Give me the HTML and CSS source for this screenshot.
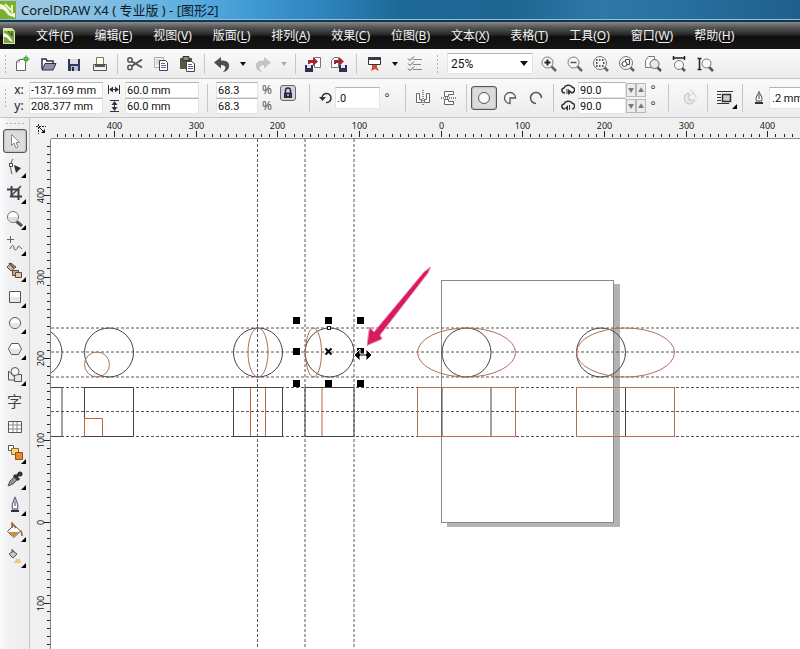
FILE: index.html
```
<!DOCTYPE html>
<html lang="zh-CN">
  <head>
    <meta charset="UTF-8" />
    <meta name="viewport" content="width=device-width, initial-scale=1.0" />
    <title>CorelDRAW X4 ( 专业版 ) - [图形2]</title>
    <link rel="stylesheet" href="styles.css">
  </head>
  <body>
    <header class="titlebar">
      <svg class="logo" viewBox="0 0 16 18">
        <rect width="16" height="18" fill="#7fae2e" />
        <path d="M0 3C6 4 8 8 13 16L8 14C5 9 3 8 0 8Z" fill="#f4f9e4" />
        <path d="M5 3L11 9M12 4V12" stroke="#e8f2c4" stroke-width="2" />
        <path d="M10 13l5 4v-5z" fill="#fff" />
      </svg>
      <h1>CorelDRAW X4 ( 专业版 ) - [图形2]</h1>
    </header>
    <nav class="menubar">
      <svg class="doc" viewBox="0 0 12 16">
        <path d="M0 0H9L12 3V16H0Z" fill="#d7e8a8" />
        <path d="M1 3H11V15H1Z" fill="#7da637" />
        <path d="M1 5C5 6 7 9 10 14L7 13C4 9 3 9 1 9Z" fill="#fff" />
        <path d="M5 3l4 5M9 3v5" stroke="#2d4a17" />
      </svg>
      <a href="#">文件(<u>F</u>)</a>
      <a href="#">编辑(<u>E</u>)</a>
      <a href="#">视图(<u>V</u>)</a>
      <a href="#">版面(<u>L</u>)</a>
      <a href="#">排列(<u>A</u>)</a>
      <a href="#">效果(<u>C</u>)</a>
      <a href="#">位图(<u>B</u>)</a>
      <a href="#">文本(<u>X</u>)</a>
      <a href="#">表格(<u>T</u>)</a>
      <a href="#">工具(<u>O</u>)</a>
      <a href="#">窗口(<u>W</u>)</a>
      <a href="#">帮助(<u>H</u>)</a>
    </nav>

    <!-- 标准工具栏 -->
    <div class="toolbar">
      <i class="grip"></i>
      <button class="btn" aria-label="新建">
        <svg viewBox="0 0 18 18"><path d="M3.500 6.500L6.500 4.500H12.500V15.500H3.500Z" fill="#fff" stroke="#666" /><path d="M3.500 7h3V5" fill="none" stroke="#999" /><circle cx="13" cy="4" r="2.500" fill="#3f9a3a" /><path d="M13 0v8M9 4h8" stroke="#6cbb5e" /></svg>
      </button>
      <button class="btn" aria-label="打开">
        <svg viewBox="0 0 18 18"><path d="M3 14V4h4l1 2h6v3" fill="#fff" stroke="#2b2f45" stroke-width="1.500" /><path d="M3 15L6 8.500H17L14 15Z" fill="#8d93a5" stroke="#2b2f45" /></svg>
      </button>
      <button class="btn" aria-label="保存">
        <svg viewBox="0 0 18 18"><path d="M3 4H15V16H3Z" fill="#34385a" /><path d="M5 4H13V9H5Z" fill="#d9dcea" /><path d="M6 11H13V16H6Z" fill="#b9bdd2" /><path d="M7 12h2v4H7z" fill="#23263f" /></svg>
      </button>
      <button class="btn" aria-label="打印">
        <svg viewBox="0 0 18 18"><path d="M5.500 10V2.500H12.500V10" fill="#fffbe8" stroke="#777" /><path d="M2.500 9.500H15.500V15.500H2.500Z" fill="#f4f4f4" stroke="#555" /><path d="M4 11h10" stroke="#222" stroke-width="1.500" /></svg>
      </button>
      <i class="sep"></i>
      <button class="btn" aria-label="剪切">
        <svg viewBox="0 0 18 18"><g fill="none" stroke="#555" stroke-width="1.500"><circle cx="4" cy="5" r="2.200" /><circle cx="4" cy="12.500" r="2.200" /><path d="M6 6.500L16 12.500M6 11L16 4.500" stroke-width="2" /></g></svg>
      </button>
      <button class="btn" aria-label="复制">
        <svg viewBox="0 0 18 18"><path d="M2.500 2.500h9v10h-9z" fill="#f7f7f7" stroke="#aaa" /><path d="M4 5h5M4 7h3M4 9h3" stroke="#bbb" /><path d="M7.500 5.500h6l2 2v8h-8z" fill="#fff" stroke="#3b4760" /><path d="M9 8.500h4M9 10.500h5M9 12.500h5" stroke="#5c6a87" /></svg>
      </button>
      <button class="btn" aria-label="粘贴">
        <svg viewBox="0 0 18 18"><path d="M2 3h12v11H2z" fill="#5b5544" /><path d="M5 1.500h6v4H5z" fill="#8d897b" stroke="#333" /><path d="M8.500 6.500h5l3 2v8h-8z" fill="#fff" stroke="#3b4760" /><path d="M10 9.500h4M10 11.500h5M10 13.500h5" stroke="#5c6a87" /></svg>
      </button>
      <i class="sep"></i>
      <button class="btn" aria-label="撤消">
        <svg viewBox="0 0 18 18"><path d="M1 7.500L8 2V5.500C14 5 17 8 16 12C15.500 15 13 16.500 10 17C13 14 14 10 8 10V13.500Z" fill="#4e4e58" /></svg>
      </button>
      <button class="drop" aria-label="撤消列表"></button>
      <button class="btn" aria-label="重做" disabled>
        <svg viewBox="0 0 18 18"><path d="M17 7.500L10 2V5.500C4 5 1 8 2 12C2.500 15 5 16.500 8 17C5 14 4 10 10 10V13.500Z" fill="#c4c4c4" /></svg>
      </button>
      <button class="drop" aria-label="重做列表" disabled></button>
      <i class="sep"></i>
      <button class="btn" aria-label="导入">
        <svg viewBox="0 0 18 18"><path d="M10.500 5V2.500h6v10h-6V9" fill="#fff" stroke="#777" /><path d="M1 10h8v7H1z" fill="#2c3154" /><path d="M3 10h4v3H3z" fill="#e0e2ee" /><path d="M4 9V5h5V2l5 4.500L9 11V8H6v1z" fill="#a9232d" /></svg>
      </button>
      <button class="btn" aria-label="导出">
        <svg viewBox="0 0 18 18"><path d="M1.500 5.500l3-3h4v10h-7z" fill="#fff" stroke="#777" /><path d="M9 10h8v7H9z" fill="#2c3154" /><path d="M11 10h4v3h-4z" fill="#e0e2ee" /><path d="M4 9V5h5V2l5 4.500L9 11V8H6v1z" fill="#a9232d" /></svg>
      </button>
      <i class="sep"></i>
      <button class="btn" aria-label="应用程序启动器">
        <svg viewBox="0 0 18 18"><path d="M3.500 2.500h12v7h-12z" fill="#fff" stroke="#333" /><path d="M3 2h13v3H3z" fill="#363b50" /><path d="M7 10h5v2l2 4-4-2-4 2 1-3z" fill="#cf4b36" /></svg>
      </button>
      <button class="drop" aria-label="启动列表"></button>
      <button class="btn" aria-label="选项">
        <svg viewBox="0 0 18 18"><path d="M7 4.500h9M7 9.500h8M7 14.500h9" stroke="#888" /><path d="M2 3.500l2 2 4-4M2 8.500l2 2 4-4M2 13.500l2 2 4-4" fill="none" stroke="#555" /></svg>
      </button>
      <i class="grip mid"></i>
      <span class="zoom">
        <select aria-label="缩放级别"><option>25%</option></select>
      </span>
      <button class="btn" aria-label="放大">
        <svg viewBox="0 0 18 18"><path d="M11 11l5 5" stroke="#666" stroke-width="2.500" /><circle cx="7.500" cy="7.500" r="5.500" fill="#f4f6f8" stroke="#777" /><path d="M4.500 7.500h6M7.500 4.500v6" stroke="#222" stroke-width="2" /></svg>
      </button>
      <button class="btn" aria-label="缩小">
        <svg viewBox="0 0 18 18"><path d="M11 11l5 5" stroke="#666" stroke-width="2.500" /><circle cx="7.500" cy="7.500" r="5.500" fill="#f4f6f8" stroke="#777" /><path d="M4.500 7.500h6" stroke="#555" stroke-width="1.500" /></svg>
      </button>
      <button class="btn" aria-label="缩放选定范围">
        <svg viewBox="0 0 18 18"><path d="M12 12l4 4" stroke="#666" stroke-width="2.500" /><circle cx="8" cy="8" r="6.500" fill="#f4f6f8" stroke="#777" /><path d="M4 5h8M4 11h8M4 8h1.500M11 8h1.500" stroke="#222" stroke-width="1.500" stroke-dasharray="1.500 1.500" /></svg>
      </button>
      <button class="btn" aria-label="缩放全部对象">
        <svg viewBox="0 0 18 18"><path d="M12 12l4 4" stroke="#666" stroke-width="2.500" /><circle cx="8" cy="8" r="6.500" fill="#f4f6f8" stroke="#777" /><path d="M7.500 4.500h4v5h-4z" fill="none" stroke="#444" /><circle cx="6.500" cy="9" r="2.500" fill="#fff" stroke="#444" /></svg>
      </button>
      <button class="btn" aria-label="显示页面">
        <svg viewBox="0 0 18 18"><path d="M1.500 5.500l3-4h6v11h-9z" fill="#fff" stroke="#777" /><path d="M13 12l4 4" stroke="#555" stroke-width="2.500" /><circle cx="10.500" cy="9" r="4.500" fill="#e6e9ec" stroke="#666" /></svg>
      </button>
      <button class="btn" aria-label="按页宽显示">
        <svg viewBox="0 0 18 18"><path d="M3 3h12M3.500 1v4M14.500 1v4" stroke="#222" stroke-width="1.500" /><path d="M12 13l3 3" stroke="#555" stroke-width="2.500" /><circle cx="9" cy="10" r="4.500" fill="#f4f6f8" stroke="#777" /></svg>
      </button>
      <button class="btn" aria-label="按页高显示">
        <svg viewBox="0 0 18 18"><path d="M3.500 3v11M1.500 3.500h4M1.500 14.500h4" stroke="#222" stroke-width="1.500" /><path d="M13 12l4 4" stroke="#555" stroke-width="2.500" /><circle cx="10.500" cy="8.500" r="4.500" fill="#f4f6f8" stroke="#777" /></svg>
      </button>
    </div>

    <!-- 属性栏 -->
    <div class="toolbar props">
      <i class="grip"></i>
      <div class="fields pos">
        <label for="pos-x">x:</label><input id="pos-x" value="-137.169 mm" />
        <label for="pos-y">y:</label><input id="pos-y" value="208.377 mm" />
      </div>
      <div class="fields size">
        <label for="size-w" aria-label="宽度"><svg viewBox="0 0 14 12"><path d="M1.500 1v9M12.500 1v9M3 5.500h8" stroke="#333" /><path d="M2 5.500l4-3v6zM12 5.500l-4-3v6z" fill="#333" /></svg></label><input id="size-w" value="60.0 mm" />
        <label for="size-h" aria-label="高度"><svg viewBox="0 0 14 12"><path d="M3 .5h9M3 11.500h9M7.500 2v8" stroke="#333" /><path d="M7.500 1l3 4h-6zM7.500 11l3-4h-6z" fill="#333" /></svg></label><input id="size-h" value="60.0 mm" />
      </div>
      <i class="sep wide"></i>
      <div class="fields scale">
        <input id="scale-x" value="68.3" /><label for="scale-x">%</label>
        <input id="scale-y" value="68.3" /><label for="scale-y">%</label>
      </div>
      <button class="lock" aria-label="锁定比率">
        <svg viewBox="0 0 14 14"><path d="M4.500 7V4.500a2.500 2.500 0 015 0V7" fill="none" stroke="#2a2c4a" stroke-width="1.500" /><path d="M3 6.500h8V12H3z" fill="#2a2c4a" /><path d="M6 8h2v2H6z" fill="#9a9cb4" /></svg>
      </button>
      <i class="sep wide"></i>
      <label class="turn" for="angle" aria-label="旋转角度"><svg viewBox="0 0 14 14"><path d="M3 7A4.500 4.500 0 117 11.500" fill="none" stroke="#333" stroke-width="1.500" /><path d="M0 6h7L3.500 10z" fill="#333" /></svg></label>
      <input id="angle" class="angle" value=".0" />
      <span class="deg">°</span>
      <i class="sep"></i>
      <button class="btn" aria-label="水平镜像">
        <svg viewBox="0 0 18 18"><path d="M2.500 4.500v9h5v-3h-2v-6zM15.500 4.500v9h-5v-3h2v-6z" fill="#fff" stroke="#666" /><path d="M9 1v16" stroke="#222" stroke-dasharray="1 1" /></svg>
      </button>
      <button class="btn" aria-label="垂直镜像">
        <svg viewBox="0 0 18 18"><path d="M4.500 2.500h9v3h-5v2h-4zM4.500 15.500h9v-3h-5v-2h-4z" fill="#fff" stroke="#666" /><path d="M1 9h16" stroke="#222" stroke-dasharray="1 1" /></svg>
      </button>
      <i class="sep"></i>
      <button class="btn active" aria-label="椭圆形">
        <svg viewBox="0 0 18 18"><circle cx="9" cy="9" r="5.500" fill="#fafafa" stroke="#555" /></svg>
      </button>
      <button class="btn" aria-label="饼形">
        <svg viewBox="0 0 18 18"><path d="M14.500 9A5.500 5.500 0 109 14.500V9z" fill="#f6f6f6" stroke="#555" stroke-width="1.300" /></svg>
      </button>
      <button class="btn" aria-label="弧形">
        <svg viewBox="0 0 18 18"><path d="M14.500 9A5.500 5.500 0 109 14.500" fill="none" stroke="#555" stroke-width="1.500" /></svg>
      </button>
      <i class="sep"></i>
      <div class="fields arcs">
        <label for="arc-a" aria-label="起始角度"><svg viewBox="0 0 14 12"><path d="M4 9C0 9 0 4 3 4C4 1 9 0 11 3C15 4 14 9 10 9" fill="none" stroke="#333" stroke-width="1.500" /><path d="M7 5v6l4-3z" fill="#333" /><path d="M6 5v5" stroke="#333" /></svg></label>
        <input id="arc-a" value="90.0" />
        <span class="spin"><button aria-label="减小">▼</button><button aria-label="增大">▲</button></span>
        <span class="deg">°</span>
        <label for="arc-b" aria-label="结束角度"><svg viewBox="0 0 14 12"><path d="M4 9C0 9 0 4 3 4C4 1 9 0 11 3C15 4 14 9 11 9" fill="none" stroke="#333" stroke-width="1.500" /><path d="M7 5v6L4 8z" fill="#333" /><path d="M8.500 5v5" stroke="#333" /></svg></label>
        <input id="arc-b" value="90.0" />
        <span class="spin"><button aria-label="减小">▼</button><button aria-label="增大">▲</button></span>
        <span class="deg">°</span>
      </div>
      <i class="sep wide"></i>
      <button class="btn" aria-label="顺时针/逆时针弧形" disabled>
        <svg viewBox="0 0 18 18"><path d="M8 4a5.500 5.500 0 106 7H8z" fill="#e6e6e6" stroke="#c4c4c4" /><path d="M9 1l4 3-4 3M12 4c2 1 3 3 3 5" fill="none" stroke="#ccc" /></svg>
      </button>
      <i class="sep"></i>
      <button class="btn flyout wrap" aria-label="段落文本换行">
        <svg viewBox="0 0 18 18"><path d="M1 2.500h16M1 5.500h4M1 8.500h4M1 11.500h4M1 14.500h12" stroke="#333" /><path d="M6.500 5.500h8v7h-8z" fill="#c9ccd2" stroke="#333" stroke-width="1.500" /></svg>
      </button>
      <i class="sep"></i>
      <label class="pen" for="outline" aria-label="轮廓宽度"><svg viewBox="0 0 14 14"><path d="M7 .5C8 4 11 6 9.500 10h-5C3 6 6 4 7 .5z" fill="#fff" stroke="#444" /><path d="M7 3v5" stroke="#444" /><path d="M3 12h8" stroke="#333" stroke-width="2" /></svg></label>
      <input id="outline" class="outline" value=".2 mm" />
    </div>

    <main class="workspace">
      <!-- 工具箱 -->
      <aside class="toolbox">
        <i class="grip"></i>
        <button class="tool active" aria-label="挑选">
          <svg viewBox="0 0 18 18"><path d="M5.500 2.500v11l2.500-2.500 2 5 2-1-2-4.500h3.500z" fill="#fff" stroke="#888" /></svg>
        </button>
        <button class="tool flyout" aria-label="形状">
          <svg viewBox="0 0 18 18"><path d="M7 1C4 5 4 10 6 16" fill="none" stroke="#555" /><path d="M3.500 5.500h3v3h-3z" fill="#fff" stroke="#444" /><path d="M8 7l7 3-5 5z" fill="#2b2f3a" /></svg>
        </button>
        <button class="tool flyout" aria-label="裁剪">
          <svg viewBox="0 0 18 18"><path d="M1 5.500h11.500V16M5.500 2v10.500H16" fill="none" stroke="#3f3f4b" stroke-width="2" /><path d="M4 13L15 2" stroke="#3f3f4b" stroke-width="1.500" /></svg>
        </button>
        <button class="tool flyout" aria-label="缩放">
          <svg viewBox="0 0 18 18"><path d="M10 11l6 5" stroke="#555" stroke-width="3" /><circle cx="7" cy="7" r="5.500" fill="#fff" stroke="#777" /><path d="M2 7h10a5 5 0 01-10 0z" fill="#dcdcdc" /></svg>
        </button>
        <button class="tool flyout" aria-label="手绘">
          <svg viewBox="0 0 18 18"><path d="M4.500 0v7M1 3.500h7" stroke="#666" /><path d="M4 13C6 8 8 9 8 12S11 14 12 11S14 12 16 13" fill="none" stroke="#555" /></svg>
        </button>
        <button class="tool flyout" aria-label="智能填充">
          <svg viewBox="0 0 18 18"><path d="M1 5l4-4 5 4-5 4z" fill="#c9b9a7" stroke="#5d4a40" /><path d="M3 1l5 5" stroke="#5d4a40" stroke-width="1.500" /><path d="M6.500 8.500h6v5h-6z" fill="#d9a274" stroke="#5d4a40" /><path d="M9.500 10.500h6v5h-6z" fill="#ecc79c" stroke="#5d4a40" /></svg>
        </button>
        <button class="tool flyout" aria-label="矩形">
          <svg viewBox="0 0 18 18"><path d="M3.500 3.500h11v11h-11z" fill="#fff" stroke="#555" /><path d="M4 9h10v5H4z" fill="#e6e6e6" /></svg>
        </button>
        <button class="tool flyout" aria-label="椭圆形">
          <svg viewBox="0 0 18 18"><circle cx="9" cy="9" r="5.500" fill="#fff" stroke="#555" /><path d="M4 9h10a5 5 0 01-10 0z" fill="#e6e6e6" /></svg>
        </button>
        <button class="tool flyout" aria-label="多边形">
          <svg viewBox="0 0 18 18"><path d="M2.500 9l3-5.500h7l3 5.500-3 5.500h-7z" fill="#fff" stroke="#555" /><path d="M3 9h12l-3 5H6z" fill="#e6e6e6" /></svg>
        </button>
        <button class="tool flyout" aria-label="基本形状">
          <svg viewBox="0 0 18 18"><path d="M2.500 5v9h9z" fill="#eee" stroke="#555" /><path d="M8.500 8.500h7v7h-7z" fill="#e6e6e6" stroke="#555" /><circle cx="9" cy="5.500" r="4" fill="#f6f6f6" stroke="#555" /></svg>
        </button>
        <button class="tool char" aria-label="文本">字</button>
        <button class="tool" aria-label="表格">
          <svg viewBox="0 0 18 18"><path d="M2.500 3.500h13v11h-13z" fill="#fff" stroke="#555" /><path d="M3 7h12M3 11h12M7 4v10M11 4v10" stroke="#888" /></svg>
        </button>
        <button class="tool flyout" aria-label="交互式调和">
          <svg viewBox="0 0 18 18"><path d="M2.500 1.500h5v5h-5z" fill="#fff" stroke="#555" /><path d="M5.500 4.500h7v6h-7z" fill="#f4d289" stroke="#8c6a2c" /><path d="M9.500 8.500h7v7h-7z" fill="#e8892b" stroke="#9a4e12" /></svg>
        </button>
        <button class="tool flyout" aria-label="滴管">
          <svg viewBox="0 0 18 18"><path d="M2 16l2-5 4-4 3 3-4 4z" fill="#8d949c" stroke="#555" /><path d="M8 5l5 5M10 7l4-4" stroke="#2f3238" stroke-width="3" /><circle cx="14" cy="4" r="2.500" fill="#2f3238" /></svg>
        </button>
        <button class="tool flyout" aria-label="轮廓">
          <svg viewBox="0 0 18 18"><path d="M9 1C10 5 13 8 11.500 13h-5C5 8 8 5 9 1z" fill="#fff" stroke="#6a7390" stroke-width="1.300" /><path d="M9 5v5" stroke="#444" /><path d="M5 15h8" stroke="#333" stroke-width="2" /></svg>
        </button>
        <button class="tool flyout" aria-label="填充">
          <svg viewBox="0 0 18 18"><path d="M1.500 9.500L8 3l6.500 6L8 15.500z" fill="#fff" stroke="#555" /><path d="M2 10h12l-6 5z" fill="#c8923d" /><path d="M6 6V1l4 5M14 9c2 0 2 3 2 5" fill="none" stroke="#8a6236" stroke-width="1.500" /></svg>
        </button>
        <button class="tool flyout" aria-label="交互式填充">
          <svg viewBox="0 0 18 18"><path d="M3 6l4-3 4 3-4 4z" fill="#c8c8c8" stroke="#555" /><path d="M6 5V1l3 4" fill="none" stroke="#666" /><path d="M8 15l2-4h4l1 4z" fill="#ecc77c" /></svg>
        </button>
      </aside>

      <div class="corner">
        <svg viewBox="0 0 12 12"><path d="M1 3.500h10M3.500 1v10" stroke="#222" stroke-dasharray="2 1" /><path d="M4 4l4 4" stroke="#222" /><path d="M10 6v4H6z" fill="#111" /></svg>
      </div>
      <svg class="ruler top"></svg>
      <svg class="ruler side"></svg>

      <!-- 绘图区 -->
      <svg class="canvas">
        <g transform="translate(-51 -139)">
          <g class="page">
            <path class="shadow" d="M447 522h166V284h7v243H447z" />
            <rect x="441.500" y="280.500" width="172" height="242" />
          </g>

          <g class="guides">
            <path d="M51 328H4000M51 352H4000M51 377H4000" />
            <path d="M51 387.500H4000M51 411.500H4000M51 436.500H4000" />
            <path d="M257.500 139V4000M305 139V4000M354 139V4000" />
          </g>

          <g class="dark">
            <circle cx="37.500" cy="352.500" r="24.500" />
            <path d="M51 387.500h11v49H51" />
            <circle cx="109" cy="352.500" r="24.500" />
            <rect x="84.500" y="387.500" width="49" height="49" />
            <circle cx="258" cy="352.500" r="24.500" />
            <rect x="233.500" y="387.500" width="49" height="49" />
            <circle cx="329.500" cy="352.500" r="24.500" />
            <rect x="305" y="387.500" width="49" height="49" />
            <circle cx="466.500" cy="352.500" r="24.500" />
            <path d="M442 387.500v49M491 387.500v49" />
            <circle cx="601" cy="352.500" r="24.500" />
            <path d="M625.500 387.500v49" />
          </g>

          <g class="brown">
            <circle cx="97" cy="364.500" r="12.500" />
            <path class="orange" d="M84.500 436.500v-18h18v18" />
            <ellipse cx="258" cy="352.500" rx="10" ry="24.500" />
            <path class="orange" d="M250.500 388v48M265.500 388v48" />
            <ellipse cx="313.500" cy="352.500" rx="8" ry="24.500" />
            <path class="orange" d="M322 388v48" />
            <ellipse cx="466.500" cy="352.500" rx="49" ry="24.500" />
            <rect x="417.500" y="387.500" width="98" height="49" />
            <ellipse cx="625.500" cy="352.500" rx="49" ry="24.500" />
            <rect x="576.500" y="387.500" width="98" height="49" />
          </g>

          <g class="handles">
            <path d="M293 317h7v7h-7zM325 317h7v7h-7zM357 317h7v7h-7z" />
            <path d="M293 348h7v7h-7zM357 348h7v7h-7z" />
            <path d="M293 380h7v7h-7zM325 380h7v7h-7zM357 380h7v7h-7z" />
            <path class="cross" d="M325.500 348.500l6 6M331.500 348.500l-6 6" />
            <rect class="node" x="327.500" y="326.500" width="3" height="3" />
            <path class="cursor" d="M354 355l6-6v5h6v-5l6 6-6 6v-5h-6v5z" />
          </g>

          <path class="pointer" d="M430.500 267L428 273L380 335L382 339L367 345.500L369.500 327L374 332L424 272Z" />
        </g>
      </svg>
    </main>
    <script>
      const STEP = 490 / 60; // 每 10 mm 的像素
      const NS = 'http://www.w3.org/2000/svg';
      const topRuler = document.querySelector('.ruler.top');
      const sideRuler = document.querySelector('.ruler.side');

      function add(parent, name, attrs, text) {
        const el = document.createElementNS(NS, name);
        Object.keys(attrs).forEach((k) => el.setAttribute(k, attrs[k]));
        if (text !== undefined) el.textContent = text;
        parent.appendChild(el);
      }

      function drawRuler(ruler, zero, length, vertical) {
        const first = Math.ceil(-zero / STEP);
        let d = '';
        for (let i = first; zero + i * STEP < length; i++) {
          const p = Math.floor(zero + i * STEP) + 0.5;
          const big = i % 10 === 0;
          const size = big ? 6 : 3;
          d += vertical ? `M${20 - size} ${p}h${size}` : `M${p} ${19 - size}v${size}`;
          if (big) {
            const attrs = vertical
              ? { transform: `translate(14 ${p}) rotate(-90)` }
              : { x: p, y: 11 };
            add(ruler, 'text', attrs, Math.abs(i * 10));
          }
        }
        add(ruler, 'path', { d });
      }

      drawRuler(topRuler, 390, topRuler.clientWidth, false);
      drawRuler(sideRuler, 383, sideRuler.clientHeight, true);
    </script>
  </body>
</html>
```
FILE: styles.css
```
* {
  margin: 0;
  padding: 0;
  box-sizing: border-box;
}
body {
  display: flex;
  flex-direction: column;
  height: 100vh;
  overflow: hidden;
  background: #fff;
  color: #222;
  font: 11px/16px "Noto Sans", "Noto Sans CJK SC", sans-serif;
}
button {
  border: none;
  background: none;
  font: inherit;
}
input,
select {
  min-width: 0;
  border: 1px solid #e4e4e4;
  border-top-color: #b4b4b4;
  outline: none;
  background: #fff;
  color: #111;
  font: 11px Roboto, "Noto Sans CJK SC", sans-serif;
}
svg {
  display: block;
}

.titlebar {
  display: flex;
  align-items: center;
  flex: none;
  gap: 5px;
  height: 22px;
  border-bottom: 2px solid #12364f;
  background: linear-gradient(90deg, #a8cde0 0, #85c0e4 12%, #58ade0 24%, #3f98d2 32%, #2b80b8 42%, #1d6897 50%, #1f6592 64%, #2e78a8 75%, #28709f 85%, #1f5f8b 100%);
  box-shadow: inset 0 -1px #8fc0dc;
}
.titlebar h1 {
  color: #0d1a26;
  font-size: 13px;
  font-weight: normal;
}
.logo {
  width: 16px;
  height: 18px;
}

.menubar {
  display: flex;
  align-items: center;
  flex: none;
  gap: 21px;
  height: 27px;
  padding-left: 3px;
  background: linear-gradient(#8a8a8a 0, #555 20%, #2c2c2c 45%, #0e0e0e 55%, #161616 100%);
}
.menubar a {
  color: #f2f2f2;
  font-size: 12px;
  text-decoration: none;
  white-space: nowrap;
}
.menubar u {
  text-underline-offset: 2px;
}
.doc {
  flex: none;
  width: 12px;
  height: 16px;
}

.toolbar {
  display: flex;
  align-items: center;
  flex: none;
  height: 30px;
  border-bottom: 1px solid #c3c7cb;
  background: linear-gradient(#fafafa, #ececec);
}
.toolbar > * {
  flex: none;
}
.props {
  height: 39px;
}
.grip {
  width: 3px;
  height: 20px;
  margin: 0 2px 0 4px;
  background: radial-gradient(circle, #b4b4b4 1px, transparent 1px) 0 0 / 3px 4px;
}
.grip.mid {
  margin: 0 8px;
}
.sep {
  width: 1px;
  height: 20px;
  margin: 0 4px;
  background: #c6c6c6;
}
.props .sep {
  height: 28px;
}
.props .sep.wide {
  margin: 0 8px;
}
.btn {
  display: grid;
  place-items: center;
  width: 26px;
  height: 24px;
}
.btn svg,
.tool svg {
  width: 18px;
  height: 18px;
}
.active {
  border: 1px solid #555;
  border-radius: 3px;
  background: #dcdcdc;
  box-shadow: inset 0 0 2px #888;
}
.drop {
  display: grid;
  place-items: center;
  width: 15px;
  height: 24px;
}
.drop::before,
.zoom::after {
  content: "";
  border: 3px solid transparent;
  border-top: 4px solid #111;
  border-bottom: none;
}
.drop:disabled::before {
  border-top-color: #aaa;
}
.zoom {
  display: grid;
  align-items: center;
  width: 86px;
  margin-right: 3px;
}
.zoom > select,
.zoom::after {
  grid-area: 1 / 1;
}
.zoom::after {
  justify-self: end;
  margin-right: 5px;
  border-width: 5px 4px 0;
  pointer-events: none;
}
.zoom select {
  width: 100%;
  height: 21px;
  padding-left: 3px;
  font-size: 12px;
  appearance: none;
}

.fields {
  display: grid;
  align-items: center;
  grid-auto-rows: 16px;
}
.fields input {
  width: 100%;
  height: 16px;
  padding-left: 1px;
}
.fields label {
  justify-self: center;
  font-size: 12px;
}
.fields svg {
  width: 14px;
  height: 12px;
}
.pos {
  grid-template-columns: 20px 74px;
}
.size {
  grid-template-columns: 22px 74px;
}
.scale {
  grid-template-columns: 42px 18px;
}
.scale label {
  color: #555;
}
.arcs {
  grid-template-columns: 20px 48px 20px 14px;
}
.spin {
  display: flex;
  background: #fff;
}
.spin button {
  width: 10px;
  height: 14px;
  border: 1px solid #b8b8b8;
  background: #ececec;
  color: #777;
  font-size: 6px;
  line-height: 12px;
}
.deg {
  width: 14px;
  color: #444;
  font-size: 12px;
  line-height: 12px;
  text-align: center;
}
.lock {
  align-self: flex-start;
  width: 16px;
  height: 16px;
  margin: 6px 5px 0 4px;
  border: 1px solid #666;
  border-radius: 3px;
  background: #d4d4da;
}
.turn svg,
.pen svg {
  width: 14px;
  height: 14px;
}
.turn {
  padding: 0 2px 0 1px;
}
.angle {
  width: 45px;
  height: 22px;
  padding-left: 1px;
}
.props .angle + .deg {
  margin-right: 7px;
}
.pen {
  margin: 0 3px 0 5px;
}
.outline {
  width: 60px;
  height: 22px;
  padding-left: 2px;
}

.flyout {
  position: relative;
}
.flyout::after {
  content: "";
  position: absolute;
  right: 1px;
  bottom: 1px;
  border-bottom: 5px solid #000;
  border-left: 5px solid transparent;
}

.workspace {
  display: grid;
  flex: 1;
  grid-template: 21px 1fr / 30px 21px 1fr;
  min-height: 0;
}
.toolbox {
  display: flex;
  flex-direction: column;
  grid-row: 1 / 3;
  align-items: center;
  gap: 2px;
  min-height: 0;
  border-right: 1px solid #c3c3c8;
  background: linear-gradient(90deg, #fbfdfd, #f1f0f2 30%, #eeeeef);
}
.toolbox .grip {
  flex: none;
  width: 20px;
  height: 3px;
  margin: 4px 0 2px;
  background-size: 4px 3px;
}
.tool {
  display: grid;
  place-items: center;
  flex: none;
  width: 24px;
  height: 24px;
}
.char {
  color: #444;
  font-size: 15px;
}
.corner {
  display: grid;
  place-items: center;
  background: #f0f0f0;
}
.corner svg {
  width: 12px;
  height: 12px;
}
.ruler {
  width: 100%;
  height: 100%;
  background: #f0f0f0;
}
.ruler path {
  stroke: #222;
}
.ruler text {
  fill: #222;
  font-size: 9px;
  text-anchor: middle;
}
.ruler.top {
  border-bottom: 1px solid #888;
}
.ruler.side {
  grid-area: 2 / 2;
  border-right: 1px solid #888;
}
.canvas {
  width: 100%;
  height: 100%;
  min-height: 0;
  background: #fff;
  fill: none;
}
.page rect {
  fill: #fff;
  stroke: #8a8a8a;
}
.shadow {
  fill: #b3b3b3;
}
.guides {
  stroke: #5a5360;
  stroke-dasharray: 3 2;
}
.dark {
  stroke: #444;
}
.brown {
  stroke: #b07058;
}
.orange {
  stroke: #c4633c;
}
.handles {
  fill: #000;
}
.cross {
  stroke: #000;
  stroke-width: 2;
}
.node {
  fill: #fff;
  stroke: #222;
}
.cursor {
  stroke: #fff;
}
.pointer {
  fill: #d81b60;
  stroke: #ee8fb1;
}
```
